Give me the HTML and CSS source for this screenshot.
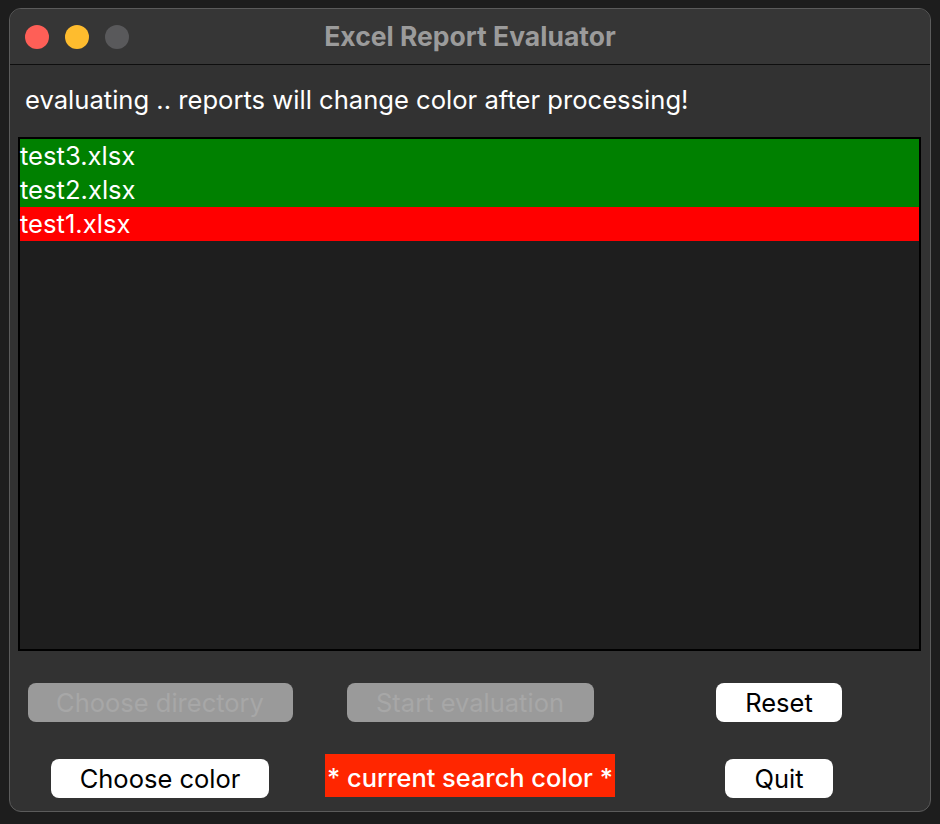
FILE: index.html
```html
<!DOCTYPE html>
<html>
<head>
<meta charset="utf-8">
<link rel="stylesheet" href="styles.css">
</head>
<body>
<div class="window">
  <div class="titlebar">
    <div class="lights">
      <span class="light red"></span>
      <span class="light yellow"></span>
      <span class="light gray"></span>
    </div>
    <div class="title">Excel Report Evaluator</div>
  </div>
  <div class="content">
    <div class="status">evaluating .. reports will change color after processing!</div>
    <div class="list">
      <div class="row done">test3.xlsx</div>
      <div class="row done">test2.xlsx</div>
      <div class="row fail">test1.xlsx</div>
    </div>
    <div class="controls">
      <button class="btn disabled wide">Choose directory</button>
      <button class="btn disabled mid">Start evaluation</button>
      <button class="btn reset">Reset</button>
      <button class="btn color">Choose color</button>
      <div class="swatch">* current search color *</div>
      <button class="btn quit">Quit</button>
    </div>
  </div>
</div>
</body>
</html>
```

FILE: styles.css
```css
html, body {
  margin: 0;
  padding: 0;
  background: #1d1d1d;
  width: 940px;
  height: 824px;
  overflow: hidden;
  font-family: Inter, "Liberation Sans", sans-serif;
}

.window {
  position: relative;
  margin: 8px 0 0 9px;
  width: 920px;
  height: 802px;
  border: 1px solid #5b5b5b;
  border-radius: 12px;
  background: #323232;
  overflow: hidden;
  display: flex;
  flex-direction: column;
}

.titlebar {
  height: 55px;
  border-bottom: 1px solid #0e0e0e;
  background: #363636;
  display: flex;
  align-items: center;
  position: relative;
}

.lights {
  display: flex;
  gap: 16px;
  padding-left: 15px;
}

.light {
  width: 24px;
  height: 24px;
  border-radius: 50%;
  display: block;
}
.light.red { background: #fe5f57; }
.light.yellow { background: #febc2e; }
.light.gray { background: #59595b; }

.title {
  position: absolute;
  left: 0;
  right: 0;
  top: 0;
  height: 55px;
  line-height: 54px;
  text-align: center;
  color: #9b9b9b;
  font-weight: 700;
  font-size: 26.5px;
  pointer-events: none;
}

.content {
  flex: 1;
  padding: 0 9px 0 8px;
  display: flex;
  flex-direction: column;
}

.status {
  color: #ffffff;
  font-size: 25.6px;
  height: 72px;
  line-height: 70px;
  padding-left: 7px;
}

.list {
  height: 510px;
  border: 2px solid #000000;
  background: #1e1e1e;
}

.row {
  height: 34px;
  line-height: 34px;
  color: #ffffff;
  font-size: 25.6px;
  padding-left: 0;
}
.row.done { background: #008000; }
.row.fail { background: #ff0000; }

.controls {
  margin: 32px 0 0 -13px;
  display: grid;
  grid-template-columns: 310px 310px 308px;
  grid-template-rows: 39px 39px;
  row-gap: 37px;
  align-items: center;
  justify-items: center;
}

.btn {
  border: none;
  border-radius: 8px;
  height: 39px;
  font-family: Inter, "Liberation Sans", sans-serif;
  font-size: 25.5px;
  background: #ffffff;
  color: #000000;
  padding: 0;
}

.btn.disabled {
  background: #9a9a9a;
  color: #a7a7a7;
}
.btn.wide { width: 265px; }
.btn.mid { width: 247px; }
.btn.reset { width: 126px; }
.btn.color { width: 218px; }
.btn.quit { width: 108px; }

.swatch {
  background: #ff2600;
  color: #ffffff;
  font-size: 25.4px;
  font-weight: 500;
  height: 43px;
  line-height: 48px;
  width: 290px;
  text-align: center;
  margin-top: -6px;
  white-space: nowrap;
  overflow: hidden;
}
```
